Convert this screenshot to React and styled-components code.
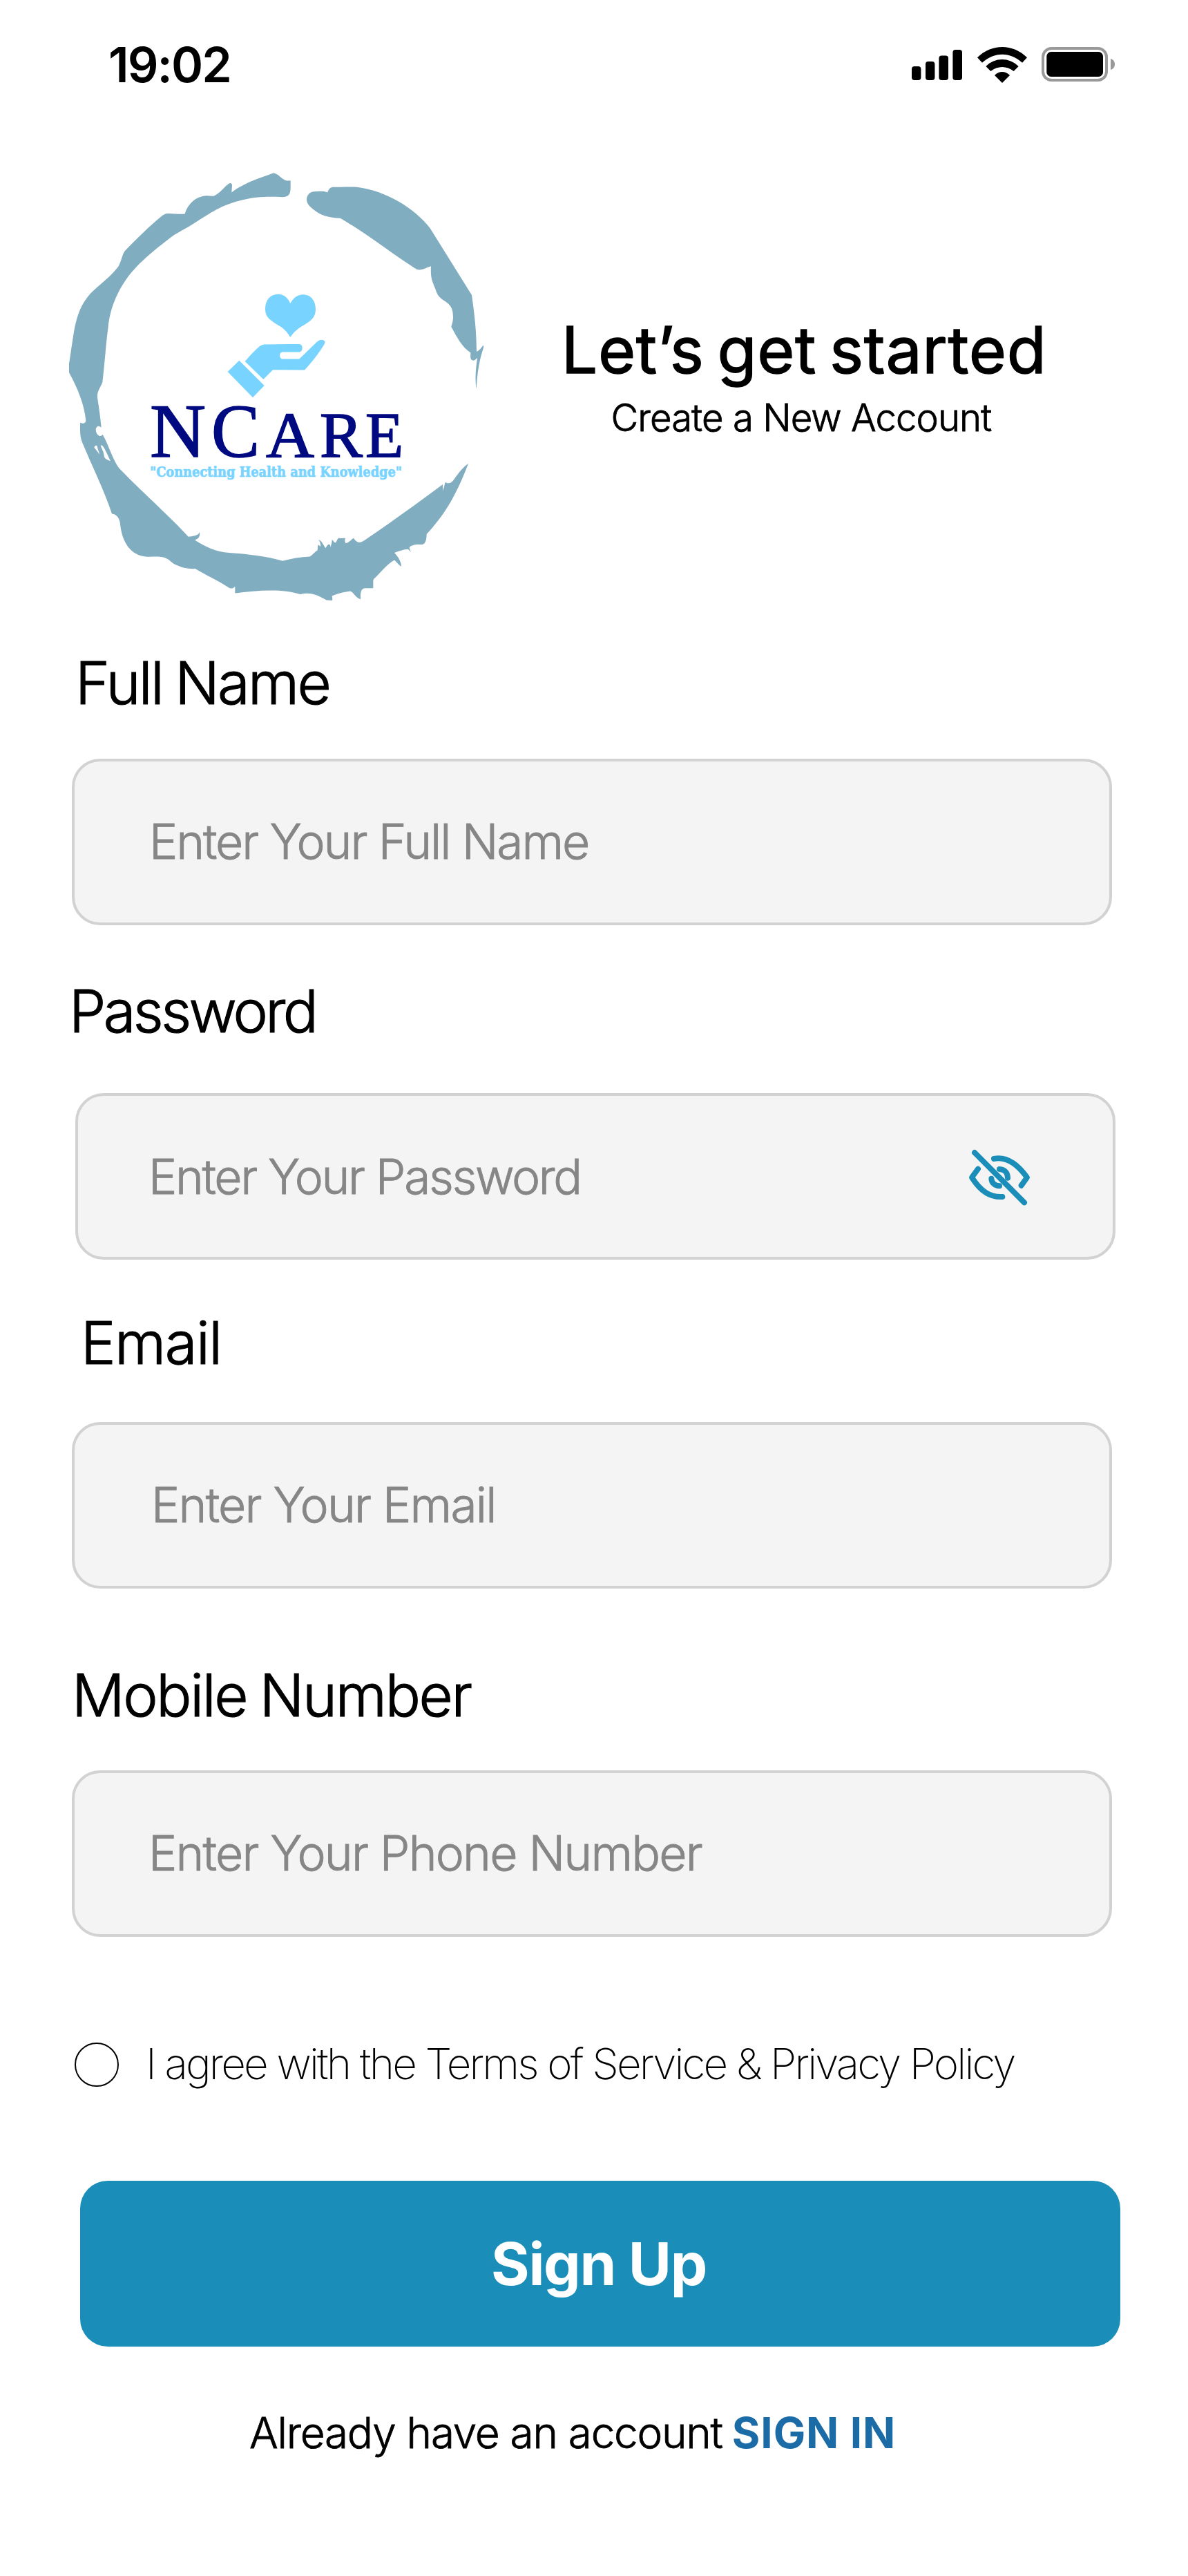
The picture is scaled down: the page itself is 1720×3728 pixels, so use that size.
import React from 'react';
import styled, { createGlobalStyle } from 'styled-components';

const GlobalStyle = createGlobalStyle`
  *, *::before, *::after { box-sizing: border-box; }
  body { margin: 0; background: #fff; }
`;

const Page = styled.main`
  display: flex;
  flex-direction: column;
  width: 1720px;
  min-height: 3728px;
  background: #ffffff;
  color: #000;
  font-family: Inter, "Liberation Sans", sans-serif;
`;

const StatusBar = styled.header`
  display: flex;
  align-items: center;
  justify-content: space-between;
  height: 100px;
  margin-top: 44px;
  padding: 0 105px 0 157px;
`;

const Clock = styled.time`
  font-size: 70px;
  font-weight: 600;
  line-height: 100px;
  letter-spacing: -1.9px;
`;

const StatusIcons = styled.div`
  display: flex;
  align-items: center;
  gap: 21px;
`;

const Intro = styled.section`
  display: flex;
  align-items: flex-start;
  padding: 101px 96px 0 100px;
`;

const Headline = styled.div`
  display: flex;
  flex: 1;
  flex-direction: column;
  align-items: center;
  gap: 13px;
  padding-top: 206px;
`;

const Title = styled.h1`
  margin: 0;
  font-size: 93px;
  font-weight: 400;
  line-height: 110px;
  letter-spacing: 0.7px;
  word-spacing: -8px;
  -webkit-text-stroke: 1.4px currentColor;
`;

const Subtitle = styled.p`
  margin: 0;
  padding-right: 8px;
  font-size: 54.5px;
  font-weight: 300;
  line-height: 60px;
  letter-spacing: -0.97px;
  -webkit-text-stroke: 0.8px currentColor;
`;

const Form = styled.form`
  display: flex;
  flex-direction: column;
  align-items: flex-start;
  padding: 64px 0 0 104px;
`;

const Field = styled.div`
  display: flex;
  flex-direction: column;
  gap: ${(p) => p.$gap}px;
  margin-top: ${(p) => p.$above || 0}px;
`;

const Label = styled.label`
  margin-left: ${(p) => p.$indent}px;
  font-size: 85px;
  font-weight: 300;
  line-height: 100px;
  letter-spacing: ${(p) => p.$tracking}px;
  word-spacing: -3px;
  -webkit-text-stroke: 1.2px currentColor;
`;

const InputBox = styled.div`
  display: flex;
  align-items: center;
  justify-content: space-between;
  width: 1506px;
  height: 241px;
  margin-left: ${(p) => p.$shift || 0}px;
  padding: 0 116px 0 ${(p) => p.$inset}px;
  border: 4px solid #d2d2d2;
  border-radius: 41px;
  background: #f4f4f4;
`;

const Placeholder = styled.span`
  padding-bottom: ${(p) => p.$lift ?? 2}px;
  color: #868686;
  font-size: 69.5px;
  font-weight: 300;
  line-height: 84px;
  letter-spacing: ${(p) => p.$tracking}px;
  white-space: nowrap;
  -webkit-text-stroke: 0.9px currentColor;
`;

const Agreement = styled.label`
  display: flex;
  align-items: center;
  gap: 39px;
  height: 64px;
  margin: 153px 0 0 4px;
`;

const Radio = styled.span`
  width: 64px;
  height: 64px;
  border: 2px solid #000;
  border-radius: 50%;
`;

const AgreementText = styled.span`
  padding-bottom: 2px;
  font-size: 62px;
  font-weight: 200;
  line-height: 62px;
  letter-spacing: -2.86px;
  white-space: nowrap;
`;

const SubmitButton = styled.button`
  width: 1506px;
  height: 240px;
  margin: 136px 0 0 12px;
  padding: 1px 4px 0 0;
  border: 0;
  border-radius: 40px;
  background: #1a8eb9;
  color: #fff;
  font-family: inherit;
  font-size: 85px;
  font-weight: 700;
  letter-spacing: -1.34px;
  line-height: 100px;
`;

const Footer = styled.p`
  display: flex;
  gap: 14px;
  margin: 85px 0 0 257px;
  font-size: 62px;
  line-height: 80px;
  white-space: nowrap;
`;

const FooterText = styled.span`
  font-weight: 300;
  letter-spacing: -1.24px;
  -webkit-text-stroke: 0.8px currentColor;
`;

const SignInLink = styled.a`
  color: #1b6ba6;
  font-weight: 700;
  letter-spacing: 0.9px;
`;

const EyeToggle = styled.svg`
  flex: none;
  margin-top: 3px;
`;

const SignalIcon = () => (
  <svg width="74" height="52" viewBox="0 0 74 52">
    <rect x="0" y="28" width="13.4" height="20" rx="4" />
    <rect x="20" y="21" width="13.4" height="27" rx="4" />
    <rect x="39.4" y="12.5" width="13.6" height="35.5" rx="4" />
    <rect x="59.4" y="4" width="13.6" height="44" rx="4" />
  </svg>
);

const WifiIcon = () => (
  <svg width="72" height="52" viewBox="378 84 216 156">
    <path d="M378 130 C440 69 532 69 594 130 L573 152 C520 104 452 104 399 152Z" />
    <path d="M415 168 C455 128 516 128 557 168 L536 189 C507 165 465 165 436 189Z" />
    <path d="M453 207 C472 187 500 187 519 207 L486 240Z" />
  </svg>
);

const BatteryIcon = () => (
  <svg width="107" height="52" viewBox="0 0 107 52">
    <rect x="2" y="2" width="92" height="46" rx="12.5" fill="none" stroke="#999" strokeWidth="4" />
    <rect x="7.3" y="7" width="81.7" height="36" rx="6.5" />
    <path d="M100 17 C108 19 108 31 100 33Z" fill="#999" />
  </svg>
);

const EyeOffIcon = () => (
  <EyeToggle width="95" height="87" viewBox="180 275 285 261" fill="none" stroke="#1a8eb9" strokeWidth="24" strokeLinecap="round" strokeLinejoin="round">
    <path d="M213 296 L429 513" />
    <path d="M297 323 C350 312 396 342 441 404 L416 439" />
    <path d="M228 367 L201 404 C241 466 281 491 334 488" />
    <path d="M321 368 C345 369 357 385 357 406" />
    <path d="M286 409 C287 427 300 440 321 441" />
  </EyeToggle>
);

const Logo = () => (
  <svg width="604" height="630" viewBox="100 245 604 630">
    <g transform="translate(80 230) scale(0.33333 0.42091)">
      <path
        fill="#80adc0"
        d="M1022 74 C1005 77 995 74 975 60 C960 50 948 47 943 50 L880 68 C840 80 800 95 766 115 L768 90 C766 82 760 82 752 86 C735 95 715 118 690 127 C680 129 665 126 650 127 C610 130 575 155 563 189 C540 191 500 187 482 188 C475 189 470 192 465 195 C410 230 350 278 305 314 C295 322 293 332 287 345 C280 362 275 370 268 376 C225 418 175 440 140 475 C105 510 88 555 78 610 C70 650 63 690 60 705 V735 C95 785 127 845 133 900 C131 911 120 911 108 907 V935 C109 955 112 965 120 980 C165 1065 215 1145 246 1220 C265 1221 280 1235 282 1255 C290 1320 330 1362 390 1367 C420 1369 450 1365 475 1371 C495 1376 500 1386 520 1394 C550 1407 580 1410 608 1409 C650 1430 710 1450 755 1475 C765 1479 775 1476 781 1470 V1493 C870 1485 980 1475 1064 1497 C1110 1488 1140 1500 1178 1517 L1202 1518 C1207 1511 1200 1507 1203 1502 C1230 1493 1260 1488 1281 1486 C1295 1489 1305 1510 1326 1514 C1326 1495 1325 1478 1345 1476 H1381 V1450 C1383 1445 1385 1442 1390 1440 C1420 1415 1440 1395 1473 1379 C1483 1385 1490 1395 1503 1402 C1503 1385 1490 1368 1473 1354 C1495 1349 1515 1342 1532 1342 C1537 1345 1540 1348 1545 1351 C1540 1342 1536 1338 1540 1334 C1555 1325 1575 1326 1592 1326 C1605 1325 1613 1315 1613 1290 C1690 1225 1740 1160 1794 1048 C1765 1062 1740 1095 1730 1104 C1718 1117 1705 1117 1694 1111 L1684 1142 L1683 1119 C1580 1180 1440 1260 1345 1310 C1325 1321 1310 1323 1296 1304 C1283 1310 1273 1320 1262 1321 C1256 1315 1258 1308 1260 1304 C1250 1304 1240 1305 1232 1303 C1225 1305 1222 1318 1216 1320 C1210 1317 1205 1310 1202 1309 C1202 1320 1198 1325 1196 1335 C1196 1328 1192 1325 1188 1325 C1180 1328 1178 1333 1174 1338 C1165 1328 1158 1313 1144 1309 C1152 1318 1152 1325 1153 1332 C1148 1330 1144 1328 1141 1326 L1139 1346 C1125 1352 1115 1365 1105 1367 C1065 1368 1025 1374 988 1382 C920 1366 830 1358 755 1354 C700 1352 650 1332 606 1310 C620 1307 630 1300 627 1283 C620 1297 595 1297 578 1299 C480 1215 370 1140 277 1063 C250 1035 230 980 206 948 C197 956 190 953 184 948 C172 938 174 918 190 919 L200 923 C196 890 191 860 183 820 C182 800 190 795 205 768 C215 700 222 620 229 585 C240 480 310 400 380 350 C425 316 470 290 505 268 C540 248 570 240 600 223 C680 183 720 160 800 144 C870 127 950 130 985 131 C1010 131 1022 125 1022 100 Z"
      />
      <path
        fill="#80adc0"
        transform="translate(960 0)"
        d="M223 115 C205 109 185 111 165 112 C145 112 132 124 132 141 C133 155 145 163 160 173 C190 194 230 203 278 204 C400 260 500 325 608 379 C630 386 650 374 672 369 C670 400 673 415 690 445 C700 470 708 476 725 485 C755 500 768 510 768 545 C767 562 762 570 760 577 C785 615 810 650 844 666 C844 678 840 690 855 693 C865 692 868 687 873 684 C867 720 862 755 869 792 C873 740 880 695 900 650 V641 C892 645 885 660 870 662 C869 590 862 540 849 468 L668 238 C600 170 480 110 350 97 C310 95 280 97 245 97 C235 98 226 105 223 115 Z"
      />
      <path fill="#fff" d="M169 992 C172 985 180 984 182 988 C185 1000 190 1008 193 1016 Z" />
      <path fill="#fff" d="M197 985 C206 983 212 990 240 1039 C225 1035 212 1030 212 1020 C210 1005 200 995 197 985 Z" />
      <g fill="#78d4ff">
        <path d="M1021 613 C1000 585 980 577 960 568 C925 550 912 540 912 515 C912 485 935 465 967 465 C995 465 1012 480 1021 497 C1032 480 1050 466 1077 466 C1110 466 1131 487 1131 517 C1131 545 1112 555 1085 569 C1060 580 1038 592 1021 613 Z" />
        <path d="M824 696 Q856 666 888 644 Q898 638 908 638 Q980 636 1060 637 C1078 638 1078 664 1058 664 H988 C971 664 971 687 988 688 H1060 L1135 630 C1150 620 1166 619 1172 630 C1172 637 1130 685 1090 720 C1084 726 1082 726 1075 726 L945 725 L904 758 Z" />
        <path d="M799 693 L908 779 L858 820 L749 732 Z" />
      </g>
    </g>
    <g fill="#000a80" stroke="#000a80" strokeWidth="1.6" fontFamily='"Liberation Serif", serif'>
      <text x="217" y="660.5" fontSize="110" textLength="81" lengthAdjust="spacingAndGlyphs">N</text>
      <text x="306" y="660.5" fontSize="110" textLength="70" lengthAdjust="spacingAndGlyphs">C</text>
      <text x="385" y="660.5" fontSize="94" textLength="70" lengthAdjust="spacingAndGlyphs">A</text>
      <text x="463" y="660.5" fontSize="94" textLength="62" lengthAdjust="spacingAndGlyphs">R</text>
      <text x="529" y="660.5" fontSize="94" textLength="55" lengthAdjust="spacingAndGlyphs">E</text>
    </g>
    <text x="217" y="689.6" fill="#78d4ff" stroke="#78d4ff" strokeWidth="0.7" fontFamily='"DejaVu Serif", serif' fontWeight="700" fontSize="21.2" textLength="365" lengthAdjust="spacingAndGlyphs">
      "Connecting Health and Knowledge"
    </text>
  </svg>
);

export default function App() {
  return (
    <>
      <GlobalStyle />
      <Page>
        <StatusBar>
          <Clock>19:02</Clock>
          <StatusIcons>
            <SignalIcon />
            <WifiIcon />
            <BatteryIcon />
          </StatusIcons>
        </StatusBar>
        <Intro>
          <Logo />
          <Headline>
            <Title>Let’s get started</Title>
            <Subtitle>Create a New Account</Subtitle>
          </Headline>
        </Intro>
        <Form>
          <Field $gap={59}>
            <Label $indent={5} $tracking={-2.7}>Full Name</Label>
            <InputBox $inset={108}>
              <Placeholder $tracking={-2.1}>Enter Your Full Name</Placeholder>
            </InputBox>
          </Field>
          <Field $gap={68} $above={75}>
            <Label $indent={-4} $tracking={-3.6}>Password</Label>
            <InputBox $inset={102} $shift={5}>
              <Placeholder $tracking={-2.36} $lift={0}>Enter Your Password</Placeholder>
              <EyeOffIcon />
            </InputBox>
          </Field>
          <Field $gap={64} $above={71}>
            <Label $indent={13} $tracking={-1.5}>Email</Label>
            <InputBox $inset={111}>
              <Placeholder $tracking={-1.8}>Enter Your Email</Placeholder>
            </InputBox>
          </Field>
          <Field $gap={58} $above={105}>
            <Label $indent={0} $tracking={-2.3}>Mobile Number</Label>
            <InputBox $inset={107}>
              <Placeholder $tracking={-1.82}>Enter Your Phone Number</Placeholder>
            </InputBox>
          </Field>
          <Agreement>
            <Radio />
            <AgreementText>I agree with the Terms of Service &amp; Privacy Policy</AgreementText>
          </Agreement>
          <SubmitButton type="button">Sign Up</SubmitButton>
          <Footer>
            <FooterText>Already have an account</FooterText>
            <SignInLink>SIGN IN</SignInLink>
          </Footer>
        </Form>
      </Page>
    </>
  );
}
